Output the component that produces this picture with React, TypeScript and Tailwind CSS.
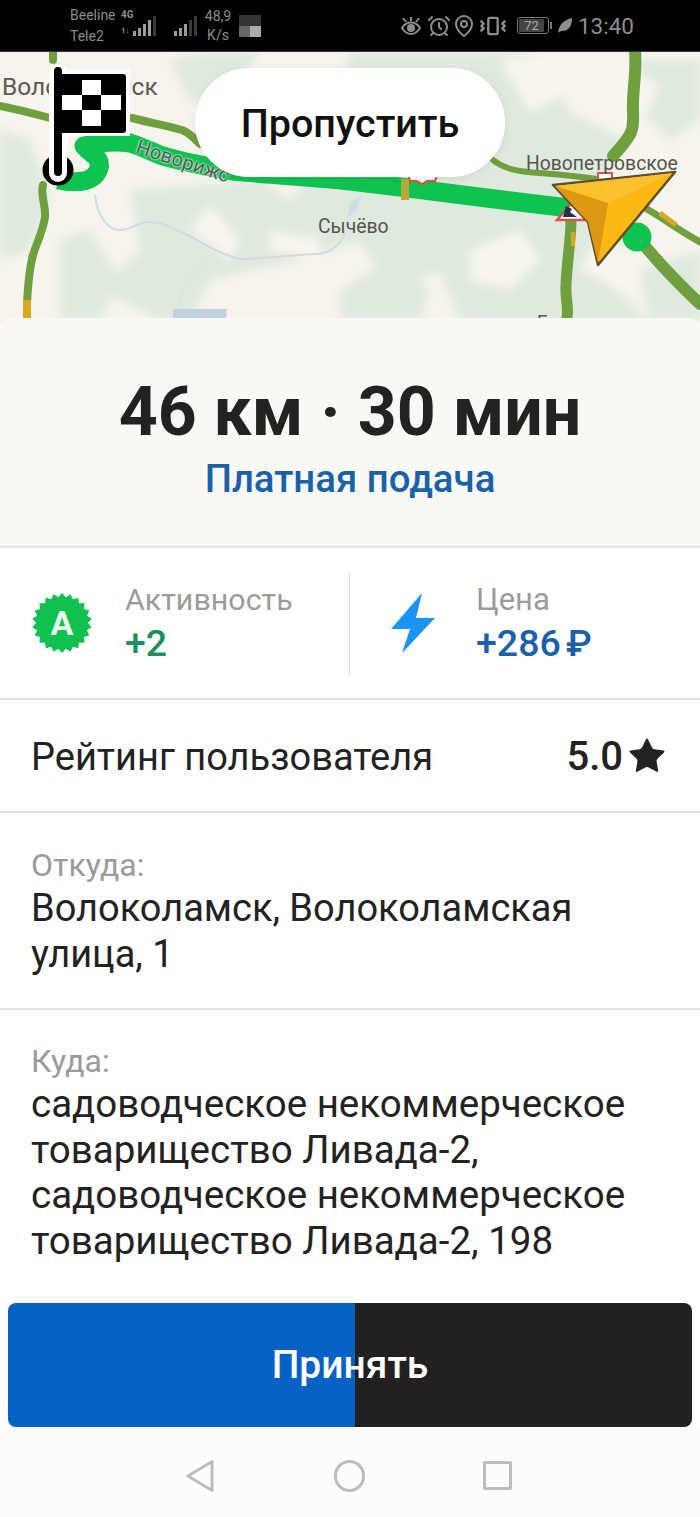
import { AlarmClock, MapPin, Star, Vibrate } from 'lucide-react'

const FONT = 'font-["Roboto","Noto_Sans",sans-serif]'

function SignalBars({ on }: { on: number }) {
  const heights = [5, 8, 12, 16, 20]
  return (
    <div className="flex items-end gap-[2px] h-[21px]">
      {heights.map((h, i) => (
        <div key={i} className={`w-[3px] ${i < on ? 'bg-[#9c9c9c]' : 'bg-[#3a3a3a]'}`} style={{ height: h }} />
      ))}
    </div>
  )
}

function StatusBar() {
  return (
    <div className="h-[52px] bg-black flex items-center text-[#8d8d8d] shrink-0 border-b border-[#333] relative z-10">
      <div className="ml-[70px] w-[51px] text-[14px] leading-[21px]">
        <div>Beeline</div>
        <div>Tele2</div>
      </div>
      <div className="relative">
        <span className="absolute left-0 top-[-5px] text-[10px] font-bold leading-none">4G</span>
        <span className="absolute left-0 top-[12px] text-[8px] font-bold leading-none">1↓</span>
        <div className="ml-[12px]">
          <SignalBars on={4} />
        </div>
      </div>
      <div className="ml-[18px]">
        <SignalBars on={3} />
      </div>
      <div className="ml-[6px] w-[30px] text-[14px] leading-[19px] text-center">
        <div>48,9</div>
        <div>K/s</div>
      </div>
      <div className="ml-[6px] w-[22px] h-[22px] grid grid-cols-2 grid-rows-2">
        <div className="bg-[#333]" />
        <div className="bg-[#333]" />
        <div className="bg-[#666]" />
        <div className="bg-[#aaa]" />
      </div>
      <div className="ml-auto mr-[66px] flex items-center">
        <svg width="22" height="22" viewBox="0 0 22 22" fill="none" stroke="#8d8d8d" strokeWidth="2">
          <path d="M2 13c2.500-4 5.500-5.500 9-5.500s6.500 1.500 9 5.500c-2.500 4-5.500 6-9 6s-6.500-2-9-6z" />
          <circle cx="11" cy="13" r="3" fill="#8d8d8d" />
          <path d="M3 3l3 4M19 3l-3 4M11 2v4" />
        </svg>
        <AlarmClock className="ml-[5px] w-[24px] h-[24px]" strokeWidth={2} />
        <MapPin className="ml-[1px] w-[24px] h-[24px]" strokeWidth={2} />
        <Vibrate className="ml-[3px] w-[28px] h-[28px]" strokeWidth={2} />
        <div className="ml-[10px] w-[32px] h-[17px] border border-[#777] rounded-[3px] p-[1px]">
          <div className="w-[25px] h-full bg-[#444] text-[13px] leading-[13px] text-[#aaa] text-center rounded-[1px]">72</div>
        </div>
        <div className="w-[2px] h-[7px] ml-[1px] bg-[#777]" />
        <svg className="ml-[5px]" width="16" height="18" viewBox="0 0 16 18" fill="#8d8d8d">
          <path d="M1 16C2 7 7 3 15 1c0 8-3 13-10 13-1 0-2 .5-4 2z" />
        </svg>
        <span className="ml-[5px] text-[22.500px] leading-[30px]">13:40</span>
      </div>
    </div>
  )
}

function MapView() {
  return (
    <div className="relative h-[272px] bg-[#f6f4ec] overflow-hidden shrink-0">
      <svg className="absolute inset-0 w-full h-full" viewBox="0 52 700 272" fill="none">
        <defs>
          <filter id="soft" x="-10%" y="-10%" width="120%" height="120%">
            <feGaussianBlur stdDeviation="4" />
          </filter>
        </defs>
        {/* forest patches */}
        <g fill="#dfeadf" filter="url(#soft)">
          <path d="M350 52h190l30 60 60 30-30 40 30 60-20 40 40 40H460l-20-50-50 20-30-50-40 10-30-50 30-40z" />
          <path d="M130 190l130-10 60 40-20 40-90 20-20 40H160l-60-30 40-40z" />
          <path d="M0 130l30 10 20 60-20 50-30 10z" />
          <path d="M170 60l40-8 50 0-30 40-40 10z" />
          <path d="M640 60h60v60l-30 20-30-30z" />
          <path d="M640 270l60-20v70h-50z" />
          <path d="M60 240l30-10 30 50-20 40H60z" />
          <path d="M340 290l50-30 40 30-10 30h-80z" />
        </g>
        <g fill="#f7f5ee" filter="url(#soft)">
          <path d="M210 205l30 35-10 20-40-30z" />
          <path d="M270 230l50 10-10 20-40-10z" />
          <path d="M470 250l50-20 20 30-30 30-40-10z" />
          <path d="M600 230l40 30-20 30-40-20z" />
          <path d="M500 60l50-8 20 40-40 20z" />
          <path d="M620 65l40 20-20 40-30-20z" />
        </g>
        {/* rivers */}
        <path d="M95 195c2 20 12 35 25 35s15-8 30-8 25 8 35 12 25 15 40 20 10 5 20 5 60-5 70-5 25-5 30-22" stroke="#cfdcda" strokeWidth="2" />
        <path d="M205 255c-8 20-25 30-28 53" stroke="#dfe2da" strokeWidth="1.500" />
        <path d="M173 309h54l-1 9h-53z" fill="#c2d1e0" />
        <path d="M362 195l-6 16-8 6 2-14z" fill="#cddcea" />
        {/* roads */}
        <g stroke="#6f9f3f" strokeWidth="8" strokeLinecap="round" strokeLinejoin="round">
          <path d="M0 106c20 4 35 8 50 12" />
          <path d="M53 52v8" />
          <path d="M132 118c20 5 35 8 50 12 8 3 12 8 18 14" />
          <path d="M43 185c-3 10 3 20 2 32-2 14-8 25-12 38-4 14-5 30-6 48" />
          <path d="M635 52c2 20-3 40-2 60 1 18 0 22-20 44" strokeWidth="12" />
          <path d="M493 160c10 8 20 10 35 12 25 2 45 3 75 8" strokeWidth="6" />
          <path d="M571 220c0 20-4 40-5 65-1 15 3 20 1 33" strokeWidth="11" />
          <path d="M645 208c15 8 30 20 55 34" strokeWidth="7" />
          <path d="M640 240c20 25 40 45 60 64" strokeWidth="12" />
        </g>
        <path d="M27 300v18" stroke="#d8a81f" strokeWidth="8" />
        <path d="M660 213l16 12" stroke="#d8a81f" strokeWidth="5" />
        <path d="M573 232v14" stroke="#d8a81f" strokeWidth="4" />
        {/* route */}
        <path
          d="M58 180c20 4 37 2 41-12 3-10-8-14-15-22 16-4 32-5 46-3 10 3 20 8 30 12 25 8 50 12 73 16 40 4 80 6 117 10 70 8 140 18 220 27"
          stroke="#10c250"
          strokeWidth="19"
          strokeLinejoin="round"
        />
        <path d="M405 179v21" stroke="#b9a93a" strokeWidth="8" />
        <circle cx="637" cy="237" r="14.500" fill="#10c250" />
        {/* road signs */}
        <path d="M408 173h30l-3 8h-8l-5 3-5-3h-7z" fill="#fff" stroke="#d9534f" strokeWidth="2" />
        <path d="M575 199l-18 21h33z" fill="#fff" stroke="#d9534f" strokeWidth="2.500" />
        <path d="M566 206l6 3-2 3 7 5h-14z" fill="#26304a" />
        <path d="M598 173h14v8h-14z" fill="#fff" stroke="#d9534f" strokeWidth="2" />
        {/* arrow */}
        <path d="M553 185l122-13-77 93-10-43z" fill="#fdb913" stroke="#5d5030" strokeWidth="2.500" strokeLinejoin="round" />
        <path d="M555 186l118-13-65 30z" fill="#fbc02d" />
        <path d="M555 186l53 17-10 60-10-41z" fill="#dd9712" />
      </svg>

      <span className="absolute left-[2px] top-[21px] text-[24.500px] leading-[28px] text-[#5d5a50]">Волоколамск</span>
      <span className="absolute left-[137px] top-[84px] text-[20px] leading-[20px] text-[#4d5a54] rotate-[18deg] origin-left [text-shadow:0_0_2px_#fff,0_0_2px_#fff]">Новорижс</span>
      <span className="absolute left-[526px] top-[101px] text-[19.300px] leading-[22px] text-[#55554e]">Новопетровское</span>
      <span className="absolute left-[318px] top-[164px] text-[19.400px] leading-[22px] text-[#55554e]">Сычёво</span>
      <span className="absolute left-[537px] top-[259px] text-[19px] leading-[22px] text-[#55554e]">Брыков</span>

      <svg className="absolute left-[38px] top-[10px]" width="96" height="132" viewBox="38 62 96 132">
        <circle cx="58" cy="170" r="15.500" fill="#000" />
        <rect x="49" y="64" width="18" height="118" rx="9" fill="#fff" />
        <path d="M62 70h68v66H62z" fill="#fff" />
        <rect x="54" y="67" width="8" height="109" rx="4" fill="#000" />
        <rect x="58" y="74" width="68" height="59" rx="3" fill="#000" />
        <path d="M82 80h19v15H82zM62 95h20v15H62zM101 95h20v15h-20zM82 110h19v16H82z" fill="#fff" />
      </svg>

      <div className="absolute left-[195px] top-[16px] w-[310px] h-[109px] bg-white rounded-[54px] flex items-center justify-center shadow-[0_2px_8px_rgba(0,0,0,0.08)]">
        <span className="text-[39.500px] font-medium text-[#111] mt-[2px]">Пропустить</span>
      </div>
    </div>
  )
}

function Badge() {
  const points: string[] = []
  for (let i = 0; i < 44; i++) {
    const r = i % 2 === 0 ? 30 : 26
    const a = (i * Math.PI) / 22
    points.push(`${30 + r * Math.sin(a)},${30 - r * Math.cos(a)}`)
  }
  return (
    <div className="relative w-[60px] h-[60px]">
      <svg width="60" height="60" viewBox="0 0 60 60">
        <polygon points={points.join(' ')} fill="#10c050" />
      </svg>
      <span className="absolute inset-0 flex items-center justify-center text-[34px] font-bold text-[#e9f9ee]">A</span>
    </div>
  )
}

export default function App() {
  return (
    <div className={`w-[700px] h-[1517px] bg-white overflow-hidden flex flex-col ${FONT}`}>
      <StatusBar />
      <MapView />

      <div className="relative -mt-[6px] rounded-t-[12px] bg-white flex-1 flex flex-col">
        <div className="h-[230px] bg-[#f9f8f5] rounded-t-[12px] border-b-2 border-[#e3e3e3] flex flex-col items-center pt-[56px]">
          <div className="text-[68px] leading-[76px] font-bold text-[#222]">46 км · 30 мин</div>
          <div className="text-[38.400px] leading-[48px] font-medium text-[#1a62a8] mt-[5px]">Платная подача</div>
        </div>

        <div className="h-[152px] border-b-2 border-[#e3e3e3] flex items-center">
          <div className="w-[350px] h-[103px] flex items-center pl-[32px] border-r border-[#ddd]">
            <Badge />
            <div className="ml-[33px]">
              <div className="text-[30.400px] leading-[40px] text-[#9b9b9b]">Активность</div>
              <div className="text-[37.500px] leading-[46px] font-medium text-[#1d8f5f]">+2</div>
            </div>
          </div>
          <div className="flex-1 flex items-center pl-[40px]">
            <svg width="46" height="60" viewBox="390 593 46 60">
              <path d="M422 593l-31 36h19l-8 24 33-35h-19z" fill="#1a94f0" />
            </svg>
            <div className="ml-[40px]">
              <div className="text-[31px] leading-[40px] text-[#9b9b9b]">Цена</div>
              <div className="text-[37.500px] leading-[46px] font-medium text-[#1b60a8] [word-spacing:-4px]">+286 ₽</div>
            </div>
          </div>
        </div>

        <div className="h-[113px] border-b-2 border-[#e3e3e3] flex items-center justify-between pl-[31px] pr-[32px]">
          <span className="text-[38px] text-[#222] mt-[3px]">Рейтинг пользователя</span>
          <div className="flex items-center">
            <span className="text-[40px] font-medium text-[#222] mt-[3px]">5.0</span>
            <Star className="ml-[3px] w-[42px] h-[42px] text-[#222]" fill="#222" strokeWidth={0} />
          </div>
        </div>

        <div className="h-[197px] border-b-2 border-[#e3e3e3] px-[31px] pt-[34px]">
          <div className="text-[32px] leading-[36px] text-[#9b9b9b]">Откуда:</div>
          <div className="text-[38px] leading-[46px] text-[#222] mt-[2px]">
            Волоколамск, Волоколамская
            <br />
            улица, 1
          </div>
        </div>

        <div className="px-[31px] pt-[33px] h-[293px]">
          <div className="text-[32px] leading-[36px] text-[#9b9b9b]">Куда:</div>
          <div className="text-[38.500px] leading-[45.500px] text-[#222] mt-[2px]">
            садоводческое некоммерческое
            <br />
            товарищество Ливада-2,
            <br />
            садоводческое некоммерческое
            <br />
            товарищество Ливада-2, 198
          </div>
        </div>

        <div className="relative mx-[8px] h-[124px] rounded-[8px] overflow-hidden flex shrink-0">
          <div className="w-[347px] bg-[#0561c4]" />
          <div className="flex-1 bg-[#222120]" />
          <span className="absolute inset-0 flex items-center justify-center text-[39px] font-medium text-white">Принять</span>
        </div>

        <div className="flex-1 bg-[#fcfcfc] flex items-center justify-center pt-[7px]">
          <svg width="30" height="34" viewBox="0 0 30 34" fill="none" stroke="#bdbdbd" strokeWidth="3" strokeLinejoin="round" className="-ml-[3px]">
            <path d="M27 2.500v29L3 17z" />
          </svg>
          <div className="ml-[119px] w-[31px] h-[32px] rounded-full border-[3px] border-[#bdbdbd]" />
          <div className="ml-[118px] w-[29px] h-[29px] rounded-[2px] border-[3px] border-[#bdbdbd]" />
        </div>
      </div>
    </div>
  )
}
